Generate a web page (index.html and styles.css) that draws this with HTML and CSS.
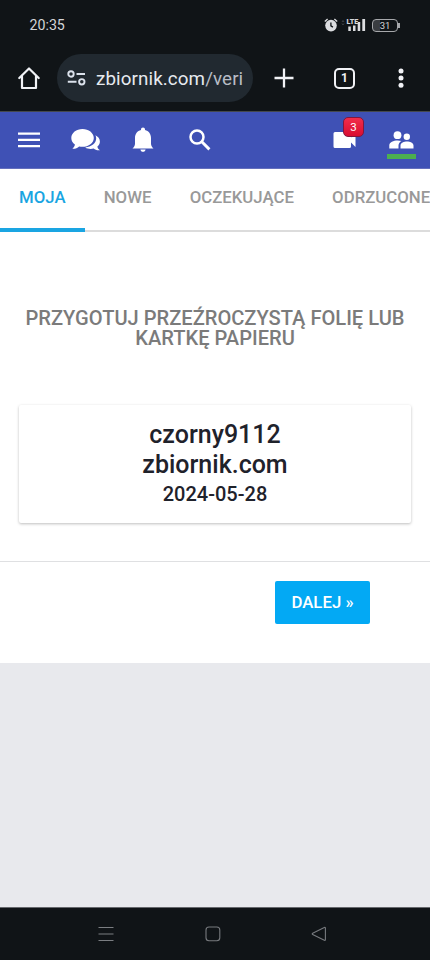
FILE: index.html
```html
<!DOCTYPE html>
<html lang="pl">
<head>
<meta charset="utf-8">
<meta name="viewport" content="width=device-width">
<title>zbiornik.com</title>
<link rel="stylesheet" href="styles.css">
</head>
<body>
<div class="status">
  <span class="time">20:35</span>
  <svg class="alarm" width="14" height="14" viewBox="0 0 14 14"><circle cx="7" cy="7.6" r="5.8" fill="#dcdde0"/><path d="M.8 3.6 3.6 1.1M13.2 3.6 10.4 1.1" stroke="#dcdde0" stroke-width="1.3"/><path d="M6.9 4.6v3.2l2 1.3" fill="none" stroke="#101417" stroke-width="1.3"/></svg>
  <span class="signal">
    <span class="lte">LTE</span>
    <svg width="26" height="14" viewBox="0 0 26 14"><g fill="#dcdde0"><path d="M7.300 8.500h2.500v4.500h-2.500zM12 7.500h2.500v5.500h-2.500zM16.700 4h2.500v9h-2.500zM21.300 1h2.800v12h-2.800z"/></g><path d="m1 4 1-1.500L3 4M1 5.500l1 1.500 1-1.500" fill="none" stroke="#4b4e52" stroke-width=".8"/></svg>
  </span>
  <span class="battery">31</span>
</div>
<div class="browser">
  <svg class="home" width="22" height="24" viewBox="0 0 22 24"><path d="M1.300 12 11 2.500 20.700 12M4 10.500V22h14V10.500" fill="none" stroke="#f1f2f6" stroke-width="2.200" stroke-linejoin="round" stroke-linecap="round"/></svg>
  <div class="address">
    <svg width="19" height="18" viewBox="0 0 19 18" fill="none" stroke="#dce2ec" stroke-width="1.900"><circle cx="4" cy="5" r="2.700"/><circle cx="14.800" cy="12.800" r="2.700"/><path d="M9.500 5h8.500M.8 12.800h8.700"/></svg>
    <span class="url">zbiornik.com<span class="path">/veri</span></span>
  </div>
  <svg class="plus" width="20" height="20" viewBox="0 0 20 20"><path d="M10 .5v19M.5 10h19" stroke="#f1f2f6" stroke-width="2.300"/></svg>
  <span class="count">1</span>
  <svg class="more" width="6" height="20" viewBox="0 0 6 20" fill="#f1f2f6"><circle cx="3" cy="3" r="2.500"/><circle cx="3" cy="10" r="2.500"/><circle cx="3" cy="17.300" r="2.500"/></svg>
</div>
<header class="appbar">
  <svg class="menu" width="22" height="16" viewBox="0 0 22 16" fill="#fff"><path d="M0 .5h22v2.300H0zM0 6.800h22v2.300H0zM0 13h22v2.300H0z"/></svg>
  <svg class="chat" width="30" height="24" viewBox="0 0 30 24" fill="#fff"><path d="M11.500 1C5.300 1 .3 4.900.3 9.900c0 2.700 1.400 5 3.600 6.600-.2 1.700-1.200 3.200-2.500 4.200 2.700.2 5-.7 6.700-2.300 1.100.3 2.200.4 3.400.4 6.200 0 11.300-4 11.300-8.900S17.700 1 11.500 1z"/><path d="M24.400 7.300c2.700 1.300 4.500 3.600 4.500 6.200 0 2-.9 3.700-2.500 5 .2 1.800 1.200 3 2.600 3.700-2.600.4-4.700-.2-6.300-1.700-2.800.8-6.100.5-8.500-1 6.300-.6 11-4.300 11-9.200 0-1-.3-2.100-.8-3z"/></svg>
  <svg class="bell" width="22" height="26" viewBox="0 0 22 26" fill="#fff"><path d="M11 .5c1.200 0 2 .8 2 1.900v.7c3.700.9 6 4 6 8v5.600c0 1.800 1 3.200 2.500 4.800H.5C2 19.900 3 18.500 3 16.700v-5.600c0-4 2.300-7.100 6-8v-.7C9 1.300 9.800.5 11 .5zM8.400 22.500h5.200c-.3 1.500-1.200 2.300-2.600 2.300s-2.300-.8-2.600-2.300z"/></svg>
  <svg class="search" width="22" height="22" viewBox="0 0 22 22" fill="none" stroke="#fff"><circle cx="8" cy="8" r="6.500" stroke-width="2.500"/><path d="m12.800 12.800 7.600 7.600" stroke-width="2.900"/></svg>
  <span class="video">
    <svg width="23" height="16" viewBox="0 0 23 16" fill="#fff"><path d="M2 0h14.500q1.500 0 1.500 1.500v4L22.500 1v14L18 10.500v4q0 1.500-1.500 1.500H2Q.5 16 .5 14.500v-13Q.5 0 2 0z"/></svg>
    <span class="badge">3</span>
  </span>
  <span class="people">
    <svg width="25" height="18" viewBox="0 0 25 18" fill="#fff"><circle cx="8.500" cy="4.200" r="3.900"/><circle cx="17.800" cy="5.700" r="3.200"/><path d="M.3 17.500v-3.200c0-3.200 4.300-4.900 8.200-4.900 1.500 0 2.700.2 3.900.6-1.700 1-2.900 2.600-2.900 4.500v3zM11.500 17.500v-3c0-2.800 3.600-4.100 6.500-4.100s6.500 1.300 6.500 4.100v3z"/></svg>
  </span>
</header>
<nav class="tabs">
  <a class="tab active">MOJA</a><a class="tab">NOWE</a><a class="tab">OCZEKUJĄCE</a><a class="tab">ODRZUCONE</a>
</nav>
<main>
  <h1>PRZYGOTUJ PRZEŹROCZYSTĄ FOLIĘ LUB KARTKĘ PAPIERU</h1>
  <section class="card">
    <div class="name">czorny9112</div>
    <div class="site">zbiornik.com</div>
    <div class="date">2024-05-28</div>
  </section>
  <div class="actions"><button class="next">DALEJ »</button></div>
</main>
<footer class="sysnav">
  <svg width="16" height="16" viewBox="0 0 16 16"><path d="M.5 1.500h15M.5 8h15M.5 14.500h15" stroke="#7b7e82" stroke-width="1.200"/></svg>
  <svg width="16" height="16" viewBox="0 0 16 16"><rect x="1" y="1" width="13.800" height="13.800" rx="3" fill="none" stroke="#777a7e" stroke-width="1.100"/></svg>
  <svg width="16" height="16" viewBox="0 0 16 16"><path d="M13.300 1.500 1.700 7.200q-1 .7 0 1.400l11.600 5.700q1.100.4 1.100-.8V2.300q0-1.200-1.100-.8z" fill="none" stroke="#777a7e" stroke-width="1.100"/></svg>
</footer>
</body>
</html>
```
FILE: styles.css
```css
* { box-sizing: border-box; }
body {
  margin: 0;
  width: 430px;
  height: 960px;
  display: flex;
  flex-direction: column;
  overflow: hidden;
  background: #e8e9ed;
  font-family: Roboto, "Liberation Sans", sans-serif;
}
svg { display: block; flex: none; }

.status {
  height: 50px;
  padding: 0 30px 0 29.5px;
  display: flex;
  align-items: center;
  background: #101417;
  color: #d4d5d8;
}
.time { flex: 1; font-size: 14.2px; line-height: 16px; }
.alarm { margin-right: 3px; }
.signal { position: relative; margin-right: 5px; }
.lte { position: absolute; left: 5.5px; top: 0; font-size: 7.2px; line-height: 7px; font-weight: 900; }
.battery {
  position: relative;
  width: 26px;
  height: 13px;
  margin-right: 2px;
  border: 1px solid #a6a8ab;
  border-radius: 4px;
  background: linear-gradient(90deg, #3a3d41 30%, transparent 30%);
  font-size: 9.5px;
  line-height: 11px;
  text-align: center;
}
.battery::after { content: ""; position: absolute; right: -3px; top: 3px; width: 2px; height: 5px; background: #a6a8ab; }

.browser {
  height: 61px;
  padding: 4px 0 9px 18px;
  display: flex;
  align-items: center;
  background: #101417;
}
.address {
  width: 196px;
  height: 48px;
  margin-left: 17px;
  padding-left: 10px;
  display: flex;
  align-items: center;
  border-radius: 24px;
  background: #212930;
}
.url { margin-left: 10px; padding-top: 2px; color: #e6e9ef; font-size: 18.8px; line-height: 24px; letter-spacing: .1px; }
.path { color: #b8bdc6; }
.plus { margin-left: 21px; }
.count {
  width: 21px;
  height: 21px;
  margin-left: 40px;
  border: 2px solid #f1f2f6;
  border-radius: 5px;
  color: #f1f2f6;
  font-size: 12px;
  line-height: 17px;
  font-weight: 700;
  text-align: center;
}
.more { margin-left: 43px; }

.appbar {
  height: 58px;
  padding-left: 17.5px;
  display: flex;
  align-items: center;
  border-top: 1px solid #44484c;
  border-bottom: 1px solid #6570bd;
  background: #3f51b5;
}
.chat { margin-left: 31.5px; }
.bell { margin-left: 31px; }
.search { margin-left: 35px; }
.video { position: relative; margin-left: 122px; }
.badge {
  position: absolute;
  left: 10px;
  top: -15px;
  width: 21px;
  height: 20px;
  border: 1px solid #81173e;
  border-radius: 5px;
  background: linear-gradient(#f22d4b, #d90d31);
  color: #fff;
  font-size: 11.5px;
  line-height: 18px;
  text-align: center;
}
.people {
  width: 29px;
  margin: 10px 0 0 31px;
  padding: 0 2px 5px;
  border-bottom: 5px solid #4caf50;
}

.tabs {
  height: 63px;
  display: flex;
  background: linear-gradient(#dcdcdc, #dcdcdc) 0 100% / 100% 2px no-repeat #fff;
}
.tab {
  flex: none;
  padding: 18px 19.2px 0 19px;
  color: #999;
  font-size: 16.8px;
  line-height: 20px;
  font-weight: 500;
}
.active { border-bottom: 4px solid #1aa5e2; color: #1aa5e2; }

main { height: 431px; padding-top: 75px; background: #fff; }
h1 {
  margin: 0;
  padding: 1px 20px 0;
  color: #7b7b7b;
  font-size: 20.1px;
  line-height: 20px;
  font-weight: 500;
  text-align: center;
}
.card {
  height: 118px;
  margin: 57px 19px 38px;
  padding-top: 15px;
  border-radius: 2px;
  box-shadow: 0 1px 3px rgba(0, 0, 0, .26);
  color: #1f222b;
  font-weight: 500;
  text-align: center;
}
.name, .site { font-size: 25px; line-height: 30px; }
.date { font-size: 20px; line-height: 28px; }
.actions {
  padding: 19px 60px 0 0;
  display: flex;
  justify-content: flex-end;
  border-top: 1px solid #dfe0e2;
}
.next {
  width: 95px;
  height: 43px;
  padding: 0;
  border: 0;
  border-radius: 2px;
  background: #03a9f4;
  color: #fff;
  font: 500 16.8px/43px Roboto, "Liberation Sans", sans-serif;
}
.sysnav {
  height: 53px;
  margin-top: auto;
  padding: 0 103px 1px 98px;
  display: flex;
  align-items: center;
  justify-content: space-between;
  border-top: 1px solid #66686d;
  background: #101417;
}
```
